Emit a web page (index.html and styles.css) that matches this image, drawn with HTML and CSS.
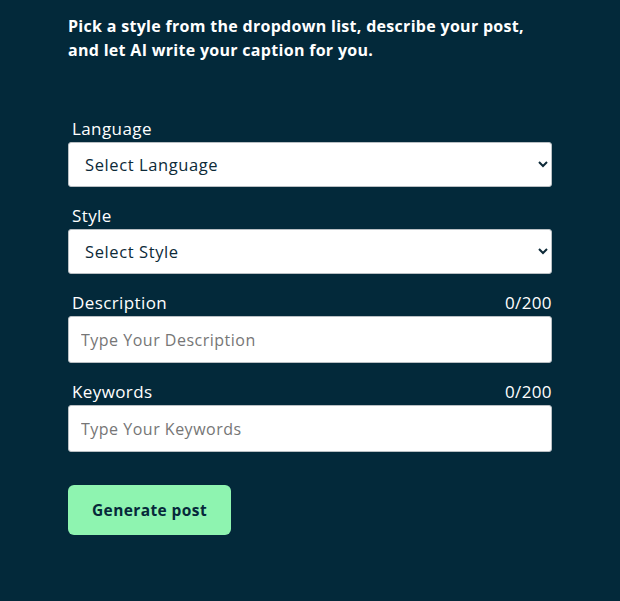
FILE: index.html
```html
<!DOCTYPE html>
<html lang="en">
<head>
<meta charset="utf-8">
<link rel="stylesheet" href="styles.css">
</head>
<body>
<main class="page">
  <p class="intro">Pick a style from the dropdown list, describe your post,<br>and let AI write your caption for you.</p>
  <form class="form">
    <div class="field">
      <div class="label-row"><label for="lang">Language</label></div>
      <select id="lang" class="control select"><option>Select Language</option></select>
    </div>
    <div class="field">
      <div class="label-row"><label for="style">Style</label></div>
      <select id="style" class="control select"><option>Select Style</option></select>
    </div>
    <div class="field">
      <div class="label-row"><label for="desc">Description</label><span class="count">0/200</span></div>
      <input id="desc" class="control input" type="text" placeholder="Type Your Description">
    </div>
    <div class="field">
      <div class="label-row"><label for="kw">Keywords</label><span class="count">0/200</span></div>
      <input id="kw" class="control input" type="text" placeholder="Type Your Keywords">
    </div>
    <button type="button" class="btn">Generate post</button>
  </form>
</main>
</body>
</html>
```
FILE: styles.css
```css
html, body {
  margin: 0;
  padding: 0;
  background: #03293a;
  height: 100%;
}
body {
  font-family: "Open Sans", "Noto Sans", sans-serif;
  color: #ffffff;
}
.page {
  width: 484px;
  padding: 14px 0 0 68px;
}
.intro {
  margin: 0;
  font-size: 16px;
  font-weight: 700;
  line-height: 24px;
  letter-spacing: 0.3px;
  white-space: nowrap;
}
.form {
  margin-top: 56px;
  display: flex;
  flex-direction: column;
}
.field {
  display: flex;
  flex-direction: column;
  margin-bottom: 18px;
}
.label-row {
  display: flex;
  justify-content: space-between;
  align-items: center;
  padding: 0 0 0 4px;
  height: 20px;
  margin-bottom: 4px;
  font-size: 17px;
  letter-spacing: 0.4px;
}
.label-row label { font-weight: 500; }
.count { font-size: 17px; letter-spacing: 0.4px; }
.control {
  box-sizing: border-box;
  width: 484px;
  margin: 0;
  background: #ffffff;
  border: 1px solid #b9bfc3;
  border-radius: 3px;
  font-family: "Open Sans", "Noto Sans", sans-serif;
  font-size: 16.5px;
}
.select {
  height: 45px;
  padding: 0 6px 0 12px;
  color: #0d2a38;
  font-weight: 500;
  letter-spacing: 0.6px;
}
.input {
  height: 47px;
  padding: 0 12px;
  color: #0d2a38;
  font-size: 16px;
  letter-spacing: 0.5px;
  outline: none;
}
.input::placeholder { color: #767676; }
.btn {
  align-self: flex-start;
  margin-top: 15px;
  width: 163px;
  height: 50px;
  border: none;
  border-radius: 6px;
  background: #8ef4b0;
  color: #06283a;
  font-family: "Open Sans", "Noto Sans", sans-serif;
  font-size: 15.5px;
  font-weight: 700;
  letter-spacing: 0.4px;
}
```
